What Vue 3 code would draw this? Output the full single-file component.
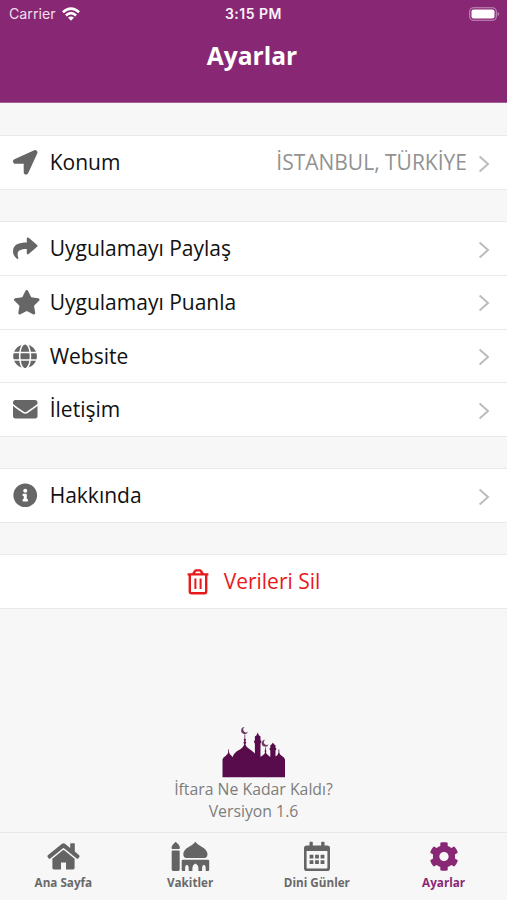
<script setup>
import { ref } from 'vue'

const shapes = {
  location: {
    box: '0 0 512 512',
    d: 'M444.52 3.52L28.74 195.42c-47.97 22.39-31.98 92.75 19.19 92.75h175.91v175.91c0 51.17 70.36 67.17 92.75 19.19l191.9-415.78c15.99-38.38-25.59-79.97-63.97-63.96z',
  },
  share: {
    box: '0 0 512 512',
    d: 'M503.691 189.836L327.687 37.851C312.281 24.546 288 35.347 288 56.015v80.053C127.371 137.907 0 170.1 0 322.326c0 61.441 39.581 122.309 83.333 154.132 13.653 9.931 33.111-2.533 28.077-18.631C66.066 312.814 132.917 274.316 288 272.085V360c0 20.7 24.3 31.453 39.687 18.164l176.004-152c11.071-9.562 11.086-26.753 0-36.328z',
  },
  star: {
    box: '0 0 576 512',
    d: 'M259.3 17.8L194 150.2 47.9 171.5c-26.2 3.8-36.7 36.1-17.7 54.6l105.7 103-25 145.5c-4.5 26.3 23.2 46 46.4 33.7L288 439.6l130.7 68.7c23.2 12.2 50.9-7.4 46.4-33.7l-25-145.5 105.7-103c19-18.5 8.5-50.8-17.7-54.6L382 150.2 316.7 17.8c-11.7-23.6-45.6-23.9-57.4 0z',
  },
  globe: {
    box: '-4 0 512 512',
    d: 'M336.5 160C322 70.7 287.8 8 248 8s-74 62.7-88.5 152h177zM152 256c0 22.2 1.2 43.5 3.3 64h185.3c2.1-20.5 3.3-41.8 3.3-64s-1.2-43.5-3.3-64H155.3c-2.1 20.5-3.3 41.8-3.3 64zm324.7-96c-28.6-67.9-86.5-120.4-158-141.6 24.4 33.8 41.2 84.7 50 141.6h108zM177.2 18.4C105.8 39.6 47.8 92.1 19.3 160h108c8.7-56.9 25.5-107.8 49.9-141.6zM487.4 192H372.7c2.1 21 3.3 42.5 3.3 64s-1.2 43-3.3 64h114.6c5.5-20.5 8.6-41.8 8.6-64s-3.1-43.5-8.5-64zM120 256c0-21.5 1.2-43 3.3-64H8.6C3.2 212.5 0 233.8 0 256s3.2 43.5 8.6 64h114.6c-2-21-3.2-42.5-3.2-64zm39.5 96c14.5 89.3 48.7 152 88.5 152s74-62.7 88.5-152h-177zm159.3 141.6c71.4-21.2 129.4-73.7 158-141.6h-108c-8.8 56.9-25.6 107.8-50 141.6zM19.3 352c28.6 67.9 86.5 120.4 158 141.6-24.4-33.8-41.2-84.7-50-141.6h-108z',
  },
  mail: {
    box: '0 0 512 512',
    d: 'M502.3 190.8c3.9-3.1 9.7-.2 9.7 4.7V400c0 26.5-21.5 48-48 48H48c-26.5 0-48-21.5-48-48V195.6c0-5 5.7-7.8 9.7-4.7 22.4 17.4 52.1 39.5 154.1 113.6 21.1 15.4 56.7 47.8 92.2 47.6 35.7.3 72-32.8 92.3-47.6 102-74.1 131.6-96.3 154-113.7zM256 320c23.2.4 56.6-29.2 73.4-41.4 132.7-96.3 142.8-104.7 173.4-128.7 5.8-4.5 9.2-11.5 9.2-18.9v-19c0-26.5-21.5-48-48-48H48c-26.5 0-48 21.5-48 48v19c0 7.4 3.4 14.3 9.2 18.9 30.6 23.9 40.7 32.4 173.4 128.7 16.8 12.2 50.2 41.8 73.4 41.4z',
  },
  info: {
    box: '0 0 512 512',
    d: 'M256 8C119.043 8 8 119.083 8 256c0 136.997 111.043 248 248 248s248-111.003 248-248C504 119.083 392.957 8 256 8zm0 110c23.196 0 42 18.804 42 42s-18.804 42-42 42-42-18.804-42-42 18.804-42 42-42zm56 254c0 6.627-5.373 12-12 12h-88c-6.627 0-12-5.373-12-12v-24c0-6.627 5.373-12 12-12h12v-64h-12c-6.627 0-12-5.373-12-12v-24c0-6.627 5.373-12 12-12h64c6.627 0 12 5.373 12 12v100h12c6.627 0 12 5.373 12 12v24z',
  },
}

const groups = [
  [{ icon: 'location', label: 'Konum', value: 'İSTANBUL, TÜRKİYE' }],
  [
    { icon: 'share', label: 'Uygulamayı Paylaş' },
    { icon: 'star', label: 'Uygulamayı Puanla' },
    { icon: 'globe', label: 'Website' },
    { icon: 'mail', label: 'İletişim' },
  ],
  [{ icon: 'info', label: 'Hakkında' }],
]

const tabs = [
  {
    label: 'Ana Sayfa',
    d: 'M15 .8Q16.5-.4 18 .8L23.2 5V1Q23.2.3 23.9.3H27.1Q27.8.3 27.8 1V8.6L32.2 12.3Q33 13.2 32.3 14.1L31.3 15.5Q30.5 16.2 29.7 15.5L17.3 5.4Q16.5 4.8 15.7 5.4L3.3 15.5Q2.5 16.2 1.7 15.5L.7 14.1Q0 13.2.8 12.3ZM15.8 7.3Q16.5 6.8 17.2 7.3L27.6 15.8V25Q27.6 26.4 26.2 26.4H19V19.4H14V26.4H6.8Q5.4 26.4 5.4 25V15.8Z',
    box: '-4 -2 40 31',
  },
  {
    label: 'Vakitler',
    d: 'M4 0Q5 1.4 6.8 2.6Q8.5 4.3 7.8 7.2H.2Q-.5 4.3 1.2 2.6Q3 1.4 4 0ZM.9 8.8H7.1Q8 8.8 8 9.7V27.8Q8 29.2 6.6 29.2H1.4Q0 29.2 0 27.8V9.7Q0 8.8.9 8.8ZM23.7 0C26.5 4.4 35.8 6.2 35.8 12.2Q35.8 15.6 33.2 16.3H14.2Q11.6 15.6 11.6 12.2C11.6 6.2 20.9 4.4 23.7 0ZM11.3 18H36.2Q37.5 18 37.5 19.3V28Q37.5 29.2 36.3 29.2H34V26Q34 23.6 32.2 23Q30.4 23.6 30.4 26V29.2H26.7V25.8Q26.7 23.3 23.7 21.7Q20.7 23.3 20.7 25.8V29.2H17V26Q17 23.6 15.2 23Q13.4 23.6 13.4 26V29.2H11.2Q10 29.2 10 28V19.3Q10 18 11.3 18Z',
    box: '-1.7 -.8 40 31',
  },
  {
    label: 'Dini Günler',
    d: 'M6.2 0H8.1Q8.8 0 8.8.7V3.6H17.2V.7Q17.2 0 17.9 0H19.8Q20.5 0 20.5.7V3.6H23.2Q26 3.6 26 6.4V26.4Q26 29.2 23.2 29.2H2.8Q0 29.2 0 26.4V6.4Q0 3.6 2.8 3.6H5.5V.7Q5.5 0 6.2 0ZM2.6 9.2V25.9Q2.6 26.6 3.3 26.6H22.7Q23.4 26.6 23.4 25.9V9.2ZM5.6 13H9.4V16.6H5.6ZM11.1 13H14.9V16.6H11.1ZM16.6 13H20.4V16.6H16.6ZM5.6 18.5H9.4V22.1H5.6ZM11.1 18.5H14.9V22.1H11.1ZM16.6 18.5H20.4V22.1H16.6Z',
    box: '-7 -.8 40 31',
  },
  {
    label: 'Ayarlar',
    d: 'M487.4 315.7l-42.6-24.6c4.3-23.2 4.3-47 0-70.2l42.6-24.6c4.9-2.8 7.1-8.6 5.5-14-11.1-35.6-30-67.8-54.7-94.6-3.8-4.1-10-5.1-14.8-2.3L380.8 110c-17.9-15.4-38.5-27.3-60.8-35.1V25.8c0-5.6-3.9-10.5-9.4-11.7-36.7-8.2-74.3-7.8-109.2 0-5.5 1.2-9.4 6.1-9.4 11.7V75c-22.2 7.9-42.8 19.8-60.8 35.1L88.7 85.5c-4.9-2.8-11-1.9-14.8 2.3-24.7 26.7-43.6 58.9-54.7 94.6-1.7 5.4.6 11.2 5.5 14L67.3 221c-4.3 23.2-4.3 47 0 70.2l-42.6 24.6c-4.9 2.8-7.1 8.6-5.5 14 11.1 35.6 30 67.8 54.7 94.6 3.8 4.1 10 5.1 14.8 2.3l42.6-24.6c17.9 15.4 38.5 27.3 60.8 35.1v49.2c0 5.6 3.9 10.5 9.4 11.7 36.7 8.2 74.3 7.8 109.2 0 5.5-1.2 9.4-6.1 9.4-11.7v-49.2c22.2-7.9 42.8-19.8 60.8-35.1l42.6 24.6c4.9 2.8 11 1.9 14.8-2.3 24.7-26.7 43.6-58.9 54.7-94.6 1.5-5.5-.7-11.3-5.6-14.1zM256 336c-44.1 0-80-35.9-80-80s35.9-80 80-80 80 35.9 80 80-35.9 80-80 80z',
    box: '-90 -12 692 536',
  },
]

const active = ref('Ayarlar')
</script>

<template>
  <div class="screen">
    <header class="header">
      <div class="status">
        <div class="carrier">
          <span>Carrier</span>
          <svg class="wifi" viewBox="0 0 18 14" fill="none" stroke="#fff" stroke-width="2.6">
            <path d="M.9 5.2Q9-2 17.1 5.2M3.9 8.4Q9 4 14.1 8.4" />
            <path d="M6 10.6Q9 8.2 12 10.6L9 13.7Z" fill="#fff" stroke="none" />
          </svg>
        </div>
        <span class="clock">3:15 PM</span>
        <div class="power">
          <svg class="battery" viewBox="0 0 31 14">
            <rect x=".7" y=".7" width="26.6" height="12.6" rx="3.8" fill="none" stroke="#c28eba" stroke-width="1.1" />
            <rect x="2.5" y="2.5" width="23" height="9" rx="2" fill="#fff" />
            <path d="M28.7 5Q30.2 5.8 30.2 7T28.7 9Z" fill="#c28eba" />
          </svg>
        </div>
      </div>
      <h1 class="title">Ayarlar</h1>
    </header>

    <main class="content">
      <section v-for="(group, i) in groups" :key="i" class="group">
        <div v-for="row in group" :key="row.label" class="row">
          <svg class="icon" :class="{ wide: row.icon === 'star' }" :viewBox="shapes[row.icon].box">
            <path :d="shapes[row.icon].d" />
          </svg>
          <span class="label">{{ row.label }}</span>
          <span v-if="row.value" class="value">{{ row.value }}</span>
          <svg class="chevron" viewBox="0 0 12 18"><path d="M1.6 1.4L10 9L1.6 16.6" /></svg>
        </div>
      </section>

      <section class="group">
        <div class="row danger">
          <svg class="trash" viewBox="0 0 22 26">
            <path d="M.6 5.4H21.4M6.2 5L8 2.2Q8.4 1.4 9.4 1.4H12.6Q13.6 1.4 14 2.2L15.8 5M2.8 5.4V22.4Q2.8 24.2 4.6 24.2H17.4Q19.2 24.2 19.2 22.4V5.4" />
            <path class="thin" d="M8.4 9.6V20M13.6 9.6V20" />
          </svg>
          <span>Verileri Sil</span>
        </div>
      </section>

      <footer class="about">
        <svg class="skyline" viewBox="-.5 0 63 52">
          <path d="M0 51.3V33.5Q.6 31.2 3 30Q5.5 28.6 5.7 26V23.5H6.5V26Q6.8 28.6 9.2 30L10.4 30.9C11 26 16.5 24.6 19.8 21.4Q21.6 19.8 21.8 18L20.8 16.8L21.8 15.2L21.2 13.8L22 12.5V8.6H22.7V12.5L23.5 13.8L22.9 15.2L23.9 16.8L22.9 18Q23.1 19.8 24.9 21.4C27.4 23.8 30.6 25 32.4 27.5V17.5L31.6 16.5V14.5H32.4V10.5L34 9.2L35.2 6.5L36.4 9.2L38 10.5V14.5H38.8V16.5L38 17.5V31Q39 30 40.4 29.3Q42.5 28 42.6 26L42 25L42.6 24V21.5H43.4V24L44 25L43.4 26Q43.5 28 45.7 29.3L47.8 31V24.5L47.1 23.6V22H47.8V19.2L49.3 18.2L50.4 16.4L51.5 18.2L53 19.2V22H53.7V23.6L53 24.5V30.4Q55.7 29 56 26.5V23.5H56.8V26.5Q57.1 28.6 59.5 30Q61.9 31.2 62.5 33.5V51.3Z" />
          <path class="crescent" d="M22.2 1.1A3.5 3.5 0 1 0 25.5 5.6A2.8 2.8 0 1 1 22.2 1.1ZM42.9 13.7A3.5 3.5 0 1 0 46.1 18.2A2.8 2.8 0 1 1 42.9 13.7Z" />
        </svg>
        <p>İftara Ne Kadar Kaldı?</p>
        <p>Versiyon 1.6</p>
      </footer>
    </main>

    <nav class="tabs">
      <button
        v-for="tab in tabs"
        :key="tab.label"
        class="tab"
        :class="{ active: active === tab.label }"
        @click="active = tab.label"
      >
        <svg class="tab-icon" :viewBox="tab.box"><path fill-rule="evenodd" :d="tab.d" /></svg>
        <span>{{ tab.label }}</span>
      </button>
    </nav>
  </div>
</template>

<style>
body {
  margin: 0;
  background: #f7f7f7;
}
</style>

<style scoped>
.screen {
  display: flex;
  flex-direction: column;
  width: 507px;
  height: 900px;
  overflow: hidden;
  background: #f7f7f7;
  font-family: "Open Sans", "Noto Sans", sans-serif;
  color: #111;
}
svg {
  display: block;
  flex: none;
}
.header {
  box-sizing: border-box;
  height: 103px;
  flex: none;
  background: #882874;
  border-bottom: 1px solid #a35e94;
  color: #fff;
}
.status {
  display: grid;
  grid-template-columns: 1fr auto 1fr;
  align-items: center;
  height: 27px;
  padding: 0 7px;
  font-family: Inter, Roboto, sans-serif;
}
.carrier {
  display: flex;
  align-items: center;
  gap: 6px;
  padding-left: 2px;
  color: #f0dfed;
  font-size: 14.2px;
}
.wifi {
  width: 18px;
  height: 14px;
}
.clock {
  font-size: 14px;
  font-weight: 600;
  letter-spacing: 0.5px;
  color: #fbf2fa;
}
.power {
  display: flex;
  justify-content: flex-end;
}
.battery {
  width: 31px;
  height: 14px;
}
.title {
  margin: 12px 3px 0 0;
  text-align: center;
  font-size: 24.6px;
  line-height: 34px;
  font-weight: 700;
}
.content {
  display: flex;
  flex: 1;
  flex-direction: column;
  gap: 31px;
  padding-top: 32px;
}
.group {
  border-top: 1px solid #e9e9e9;
  border-bottom: 1px solid #e9e9e9;
  background: #fff;
}
.row {
  display: flex;
  box-sizing: border-box;
  align-items: center;
  height: 53px;
  padding: 0 17px 0 13px;
  font-size: 21px;
  line-height: 29px;
}
.row + .row {
  height: 53.7px;
  border-top: 1px solid #e9e9e9;
}
.icon {
  width: 24.5px;
  height: 24.5px;
  margin-right: 12.2px;
  fill: #666;
}
.icon.wide {
  width: 27.5px;
  margin-right: 9.2px;
}
.label {
  flex: 1;
}
.value {
  margin-right: 11px;
  color: #929292;
}
.chevron {
  width: 12px;
  height: 18px;
  margin-top: 2px;
  fill: none;
  stroke: #bcbcbc;
  stroke-width: 2;
}
.danger {
  justify-content: center;
  gap: 15px;
  padding: 0;
  color: #e8191b;
}
.trash {
  width: 22px;
  height: 26px;
  fill: none;
  stroke: #e8191b;
  stroke-width: 2.4;
}
.trash .thin {
  stroke-width: 2;
}
.about {
  display: flex;
  flex-direction: column;
  align-items: center;
  margin-top: 86px;
  color: #7d7d7d;
  font-size: 15.8px;
  line-height: 22px;
}
.about p {
  margin: 0;
}
.skyline {
  width: 63px;
  height: 52px;
  fill: #590c4c;
}
.crescent {
  fill: #6d3a64;
}
.tabs {
  display: grid;
  grid-template-columns: repeat(4, 1fr);
  box-sizing: border-box;
  height: 68px;
  flex: none;
  border-top: 1px solid #e8e8e8;
}
.tab {
  display: flex;
  flex-direction: column;
  align-items: center;
  padding: 8px 0 0;
  border: 0;
  background: none;
  color: #696969;
  font: 700 11.7px/16px "Open Sans", "Noto Sans", sans-serif;
}
.tab-icon {
  width: 40px;
  height: 31px;
  margin-bottom: 2px;
  fill: #646464;
}
.tab.active {
  color: #882874;
}
.tab.active .tab-icon {
  fill: #882874;
}
</style>
